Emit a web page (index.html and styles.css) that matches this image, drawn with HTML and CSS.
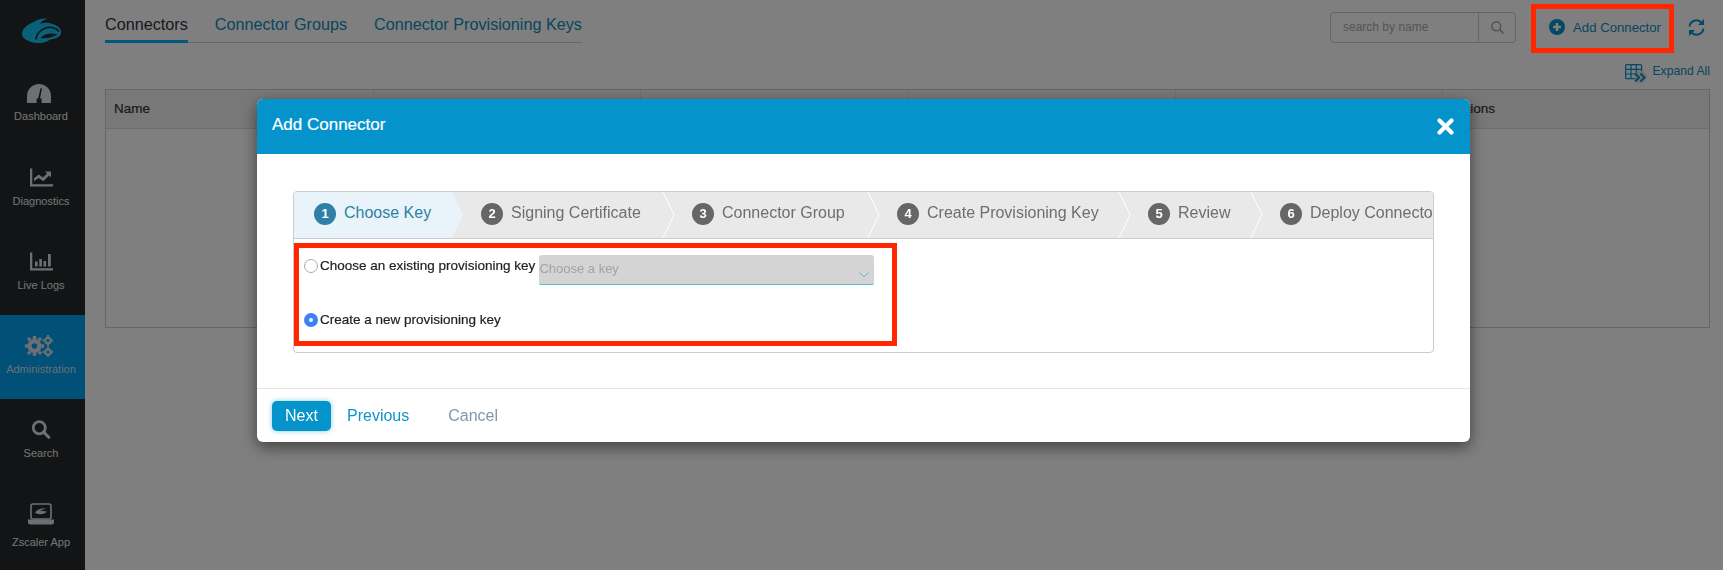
FILE: index.html
```html
<!DOCTYPE html>
<html lang="en">
<head>
<meta charset="utf-8">
<title>Add Connector</title>
<link rel="stylesheet" href="styles.css">
</head>
<body>
<div class="app">
  <nav class="sidebar">
    <div class="logo">
      <svg width="39" height="25" viewBox="0 0 39 25"><path class="logo-fill" d="M0 16C0 10 6 6.500 11 4.300 15 1.500 20 0 26 .5 22 1.500 19 3.500 18 5.800 24 3.500 31 5 35 8c3 2 4.500 4 4 7-.5 4-5.500 6-11 6.500-4 3.500-11 4.500-17 3C5 23 0 20 0 16z"/><path class="logo-line" d="M14 21.500C14.500 14 23 8 30 9.500c3 .6 5.500 2 7 4"/><path class="logo-cut" d="M18.500 20C22 15.500 30 14.500 35.500 16.500 31 19.500 24 21 18.500 20z"/></svg>
    </div>
    <a class="nav-item nav-dash">
      <svg class="nav-icon" width="24" height="19" viewBox="0 0 24 19"><path class="ico" d="M0 19v-7C0 5 5.400 0 12 0s12 5 12 12v7z"/><path class="needle" d="M15 4.500L13 14.500h-1.800L13.600 4zM9.600 14.500h5V19h-5z"/></svg>
      <span>Dashboard</span>
    </a>
    <a class="nav-item">
      <svg class="nav-icon" width="23" height="18" viewBox="0 0 23 18"><path class="ico" d="M0 0h2.300v15.700H23V18H0z"/><path class="ico" d="M4 12.500V9.700l4.700-3.800 4.300 3 4-3.900-2-2h6v6l-2-2-5.700 5.700-4.500-3.200z"/></svg>
      <span>Diagnostics</span>
    </a>
    <a class="nav-item">
      <svg class="nav-icon" width="23" height="18" viewBox="0 0 23 18"><path class="ico" d="M0 0h2.300v15.700H23V18H0z"/><path class="ico" d="M5 9h2.600v5H5zM9.300 6.500h2.600V14H9.300zM13.500 8.500h2.600V14h-2.600zM18 1.500h2.800V14H18z"/></svg>
      <span>Live Logs</span>
    </a>
    <a class="nav-item active">
      <svg class="nav-icon nav-gears" width="28" height="22" viewBox="0 0 28 22"><g class="ico"><circle cx="9.500" cy="11" r="7"/><path d="M8 1h3l.5 3h-4zM8 21h3l.5-3h-4zM-.2 9.500v3l3 .5v-4zM19.200 9.500v3l-3 .5v-4zM2 4l2-2 2.500 2-2.500 2.500zM17 4l-2-2-2.500 2 2.500 2.500zM2 18l2 2 2.500-2-2.500-2.500zM17 18l-2 2-2.500-2 2.500-2.500z"/></g><circle class="hole" cx="9.500" cy="11" r="2.800"/><g class="ico"><circle cx="23" cy="5.500" r="3.800"/><circle cx="23" cy="17" r="3.800"/><path d="M22 0h2v2h-2zM22 9h2v2h-2zM17.500 4.500h2v2h-2zM26.500 4.500h1.500v2h-1.500zM22 11.500h2v2h-2zM22 20.500h2V22h-2zM17.500 16h2v2h-2zM26.500 16h1.500v2h-1.500z"/></g><circle class="hole" cx="23" cy="5.500" r="1.600"/><circle class="hole" cx="23" cy="17" r="1.600"/></svg>
      <span>Administration</span>
    </a>
    <a class="nav-item">
      <svg class="nav-icon" width="22" height="22" viewBox="0 0 22 22"><circle class="ico-line" cx="9" cy="9" r="7" stroke-width="3.200"/><path class="ico-line" d="M14 14l6 6" stroke-width="3.600" stroke-linecap="round"/></svg>
      <span>Search</span>
    </a>
    <a class="nav-item app-item">
      <svg class="nav-icon" width="28" height="22" viewBox="0 0 28 22"><rect class="ico-line" x="4" y="1" width="20" height="15" rx="2" stroke-width="1.600"/><path class="ico" d="M1 16.500h26v2.500a2.500 2.500 0 0 1-2.500 2.500h-21A2.500 2.500 0 0 1 1 19z"/><path class="ico" d="M8 9.500c2-3 7-5 11-3.500-3 0-5 1-6 2.500 2-.8 5-.5 7 .3-2 2.200-6 3-10 2z"/></svg>
      <span>Zscaler App</span>
    </a>
  </nav>

  <main class="main">
    <header class="topbar">
      <div class="tabs">
        <a class="tab current">Connectors</a>
        <a class="tab">Connector Groups</a>
        <a class="tab">Connector Provisioning Keys</a>
      </div>
      <div class="tools">
        <div class="search">
          <span class="search-text">search by name</span>
          <span class="search-btn">
            <svg width="13" height="13" viewBox="0 0 13 13"><circle cx="5.300" cy="5.300" r="4.500" fill="none" stroke="#999" stroke-width="1.200"/><path d="M8.600 8.600L12.400 12.400" stroke="#999" stroke-width="1.400"/></svg>
          </span>
        </div>
        <a class="add">
          <svg width="16" height="16" viewBox="0 0 16 16"><circle cx="8" cy="8" r="8" fill="#0593cc"/><path d="M8 4v8M4 8h8" stroke="#fff" stroke-width="2.600"/></svg>
          <span>Add Connector</span>
        </a>
        <a class="refresh">
          <svg width="17" height="17" viewBox="0 0 17 17"><g fill="none" stroke="#0593cc" stroke-width="2"><path d="M1.500 7.500A7 7 0 0 1 13.500 3.500"/><path d="M15.500 9.500A7 7 0 0 1 3.500 13.500"/></g><path fill="#0593cc" d="M16 0v6h-6zM1 17v-6h6z"/></svg>
        </a>
      </div>
    </header>
    <div class="expand-row">
      <a class="expand">
        <svg width="22" height="19" viewBox="0 0 22 19"><g fill="none" stroke="#0593cc" stroke-width="1.200"><rect x=".6" y=".6" width="16" height="14" rx="1"/><path d="M.6 5.300h16M.6 10h16M6 .6v14M11.300 .6v14"/></g><circle cx="15.500" cy="13" r="6" fill="#e2e2e2"/><path fill="none" stroke="#0593cc" stroke-width="2" d="M10 9.500l4 4-4 4M15.500 9.500l4 4-4 4"/></svg>
        <span>Expand All</span>
      </a>
    </div>
    <section class="table">
      <div class="thead">
        <div class="th">Name</div>
        <div class="th"></div>
        <div class="th"></div>
        <div class="th"></div>
        <div class="th"></div>
        <div class="th">Actions</div>
      </div>
    </section>
  </main>
</div>

<div class="backdrop"></div>

<div class="annot annot-add"></div>

<div class="modal">
  <div class="modal-head">
    <span class="modal-title">Add Connector</span>
    <svg class="close" width="17" height="17" viewBox="0 0 17 17"><path d="M2.500 2.500l12 12M14.500 2.500l-12 12" stroke="#fff" stroke-width="4.200" stroke-linecap="round"/></svg>
  </div>
  <div class="modal-body">
    <div class="wizard">
      <div class="steps">
        <div class="step step-1 on"><b>1</b><span>Choose Key</span></div>
        <div class="step step-2"><b>2</b><span>Signing Certificate</span><svg class="chev" width="13" height="46" viewBox="0 0 13 46"><path d="M1 0l11 22.500L1 46"/></svg></div>
        <div class="step step-3"><b>3</b><span>Connector Group</span><svg class="chev" width="13" height="46" viewBox="0 0 13 46"><path d="M1 0l11 22.500L1 46"/></svg></div>
        <div class="step step-4"><b>4</b><span>Create Provisioning Key</span><svg class="chev" width="13" height="46" viewBox="0 0 13 46"><path d="M1 0l11 22.500L1 46"/></svg></div>
        <div class="step step-5"><b>5</b><span>Review</span><svg class="chev" width="13" height="46" viewBox="0 0 13 46"><path d="M1 0l11 22.500L1 46"/></svg></div>
        <div class="step step-6"><b>6</b><span>Deploy Connector</span></div>
      </div>
      <div class="wizard-body">
        <div class="choices">
          <div class="choice choice-a">
            <span class="radio"></span>
            <label>Choose an existing provisioning key</label>
            <div class="select">
              <span>Choose a key</span>
              <svg width="10" height="6" viewBox="0 0 10 6"><path d="M.5.500L5 5 9.500.5" fill="none" stroke="#5bb8de" stroke-width="1"/></svg>
            </div>
          </div>
          <div class="choice choice-b">
            <span class="radio checked"></span>
            <label>Create a new provisioning key</label>
          </div>
        </div>
      </div>
    </div>
  </div>
  <div class="modal-foot">
    <a class="btn-next">Next</a>
    <a class="btn-prev">Previous</a>
    <a class="btn-cancel">Cancel</a>
  </div>
</div>
</body>
</html>
```
FILE: styles.css
```css
* { box-sizing: border-box; }
html, body { margin: 0; height: 100%; }
body {
  font-family: "Liberation Sans", Arial, sans-serif;
  background: #fff;
  color: #333;
  overflow: hidden;
}
.app { display: flex; height: 570px; }

.sidebar {
  width: 85px;
  flex: none;
  background: #24282c;
  display: flex;
  flex-direction: column;
}
.logo { height: 63px; padding: 18px 0 0 22px; }
.logo svg { display: block; }
.logo-fill { fill: #14c0f0; }
.logo-cut { fill: #24282c; }
.logo-line { fill: none; stroke: #24282c; stroke-width: 1.700; }
.nav-item {
  height: 84px;
  flex: none;
  display: flex;
  flex-direction: column;
  align-items: center;
  padding: 21px 3px 0 0;
  color: #e8e8e8;
  font-size: 11px;
  line-height: 13px;
}
.nav-icon { display: block; height: 19px; margin-bottom: 8px; overflow: visible; }
.nav-dash .nav-icon { margin: 0 5px 7px 0; }
.nav-item.active { background: #00a0f0; color: #d4dce2; padding-top: 20px; }
.nav-item .nav-gears { height: 22px; margin: 0 5px 6px 0; }
.nav-item.app-item { padding-top: 20px; }
.app-item .nav-icon { height: 22px; margin-bottom: 11px; }
.ico { fill: #dcdfe3; }
.ico-line { fill: none; stroke: #dcdfe3; }
.needle { fill: #24282c; }
.hole { fill: #00a0f0; }

.main { flex: 1; min-width: 0; padding: 0 13px 0 20px; }
.topbar { height: 62px; display: flex; justify-content: space-between; align-items: flex-start; }
.tabs { display: flex; gap: 27px; border-bottom: 1px solid #ccc; margin-top: 12px; height: 31px; }
.tab { font-size: 16.200px; line-height: 24px; height: 31px; color: #0e8cbf; }
.tab.current { color: #333; border-bottom: 3px solid #00b0f4; }
.tools { display: flex; align-items: flex-start; }
.search {
  width: 186px;
  height: 31px;
  margin-top: 12px;
  border: 1px solid #ccc;
  border-radius: 4px;
  display: flex;
  font-size: 12px;
  color: #aaa;
}
.search-text { flex: 1; line-height: 29px; padding-left: 12px; }
.search-btn { width: 37px; border-left: 1px solid #ccc; display: flex; align-items: center; justify-content: center; }
.add {
  display: flex;
  align-items: center;
  gap: 8px;
  height: 20px;
  margin: 17px 0 0 33px;
  font-size: 13.200px;
  color: #0e8cbf;
}
.add svg, .refresh svg { display: block; }
.refresh { margin: 19px 0 0 27px; width: 22px; }
.expand-row { display: flex; justify-content: flex-end; height: 27px; }
.expand { display: flex; gap: 5px; color: #0e8cbf; font-size: 12.200px; line-height: 16px; }
.expand svg { display: block; margin: 2px 0 0; }
.expand span { margin-top: 1px; }

.table { height: 239px; border: 1px solid #ccc; }
.thead { display: grid; grid-template-columns: repeat(6, 1fr); height: 39px; background: #f0f0f0; border-bottom: 1px solid #ddd; }
.th { padding-left: 8px; line-height: 38px; font-size: 13.500px; color: #333; -webkit-text-stroke: .2px #333; border-left: 1px solid #ddd; }
.th:first-child { border-left: 0; }

.backdrop { position: fixed; inset: 0; background: rgba(0, 0, 0, .5); }
.annot { position: fixed; border: 5px solid #ff2600; }
.annot-add { left: 1531px; top: 4px; width: 143px; height: 49px; }

.modal {
  position: fixed;
  left: 257px;
  top: 99px;
  width: 1213px;
  height: 343px;
  background: #fff;
  border-radius: 6px;
  box-shadow: 0 5px 15px rgba(0, 0, 0, .5);
  display: flex;
  flex-direction: column;
}
.modal-head {
  height: 55px;
  flex: none;
  background: #0593cc;
  border-radius: 6px 6px 0 0;
  display: flex;
  align-items: center;
  justify-content: space-between;
  padding: 0 16px 0 15px;
}
.modal-title { color: #fff; font-size: 17px; margin-top: -3px; -webkit-text-stroke: .2px #fff; }
.close { display: block; }
.modal-body { height: 234px; flex: none; padding: 37px 36px 0; }
.wizard { height: 162px; border: 1px solid #ccc; border-radius: 4px; overflow: hidden; }
.steps { display: flex; height: 47px; background: #e9e9e9; border-bottom: 1px solid #ccc; overflow: hidden; }
.step {
  position: relative;
  flex: none;
  height: 46px;
  display: flex;
  align-items: center;
  gap: 8px;
  padding-left: 17px;
  font-size: 16px;
  color: #6e6e6e;
  white-space: nowrap;
}
.step b {
  width: 22px;
  height: 22px;
  border-radius: 50%;
  background: #666;
  color: #fff;
  font-size: 13px;
  line-height: 22px;
  text-align: center;
  margin-top: -2px;
}
.step span { margin-top: -4px; }
.step.on { background: #e8f4fa; clip-path: polygon(0 0, calc(100% - 11px) 0, 100% 50%, calc(100% - 11px) 100%, 0 100%); color: #2f7fa6; }
.step.on b { background: #2f7fa6; }
.chev { position: absolute; right: 0; top: 0; }
.chev path { fill: none; stroke: #fff; stroke-width: 1; }
.step-1 { width: 169px; padding-left: 20px; }
.step-2 { width: 212px; padding-left: 18px; }
.step-3 { width: 205px; }
.step-4 { width: 251px; }
.step-5 { width: 132px; }
.step-6 { flex: 1; }

.wizard-body { padding: 4px 0 0 0; }
.choices { width: 603px; height: 103px; border: 5px solid #ff2600; }
.choice { display: flex; align-items: flex-start; }
.choice-a { height: 61px; padding: 7px 0 0 5px; }
.choice-b { padding-left: 5px; }
.radio {
  width: 14px;
  height: 14px;
  flex: none;
  margin-top: 4px;
  border-radius: 50%;
  border: 1px solid #aaa;
  background: #fff;
}
.radio.checked { border: 5px solid #3b82f6; background: #fff; }
.choice label { font-size: 13.500px; line-height: 18px; margin: 2px 0 0 2px; color: #222; -webkit-text-stroke: .2px #222; white-space: nowrap; }
.select {
  width: 335px;
  height: 30px;
  margin-left: 4px;
  background: #d4d4d4;
  border-bottom: 1px solid #5bb8de;
  border-radius: 3px 3px 2px 2px;
  display: flex;
  justify-content: space-between;
  align-items: center;
  padding-right: 5px;
  font-size: 13px;
  color: #a3a3a3;
}
.select svg { display: block; margin-top: 10px; }
.select span { margin-top: -3px; }

.modal-foot {
  flex: 1;
  border-top: 1px solid #e5e5e5;
  display: flex;
  align-items: center;
  padding: 0 15px;
  font-size: 16px;
}
.btn-next {
  width: 59px;
  height: 30px;
  background: #0593cc;
  border-radius: 5px;
  color: #fff;
  text-align: center;
  line-height: 30px;
  box-shadow: 0 0 5px rgba(5, 147, 204, .5);
}
.btn-prev { color: #0f93cc; margin-left: 16px; }
.btn-cancel { color: #8297b0; margin-left: 39px; }
```
